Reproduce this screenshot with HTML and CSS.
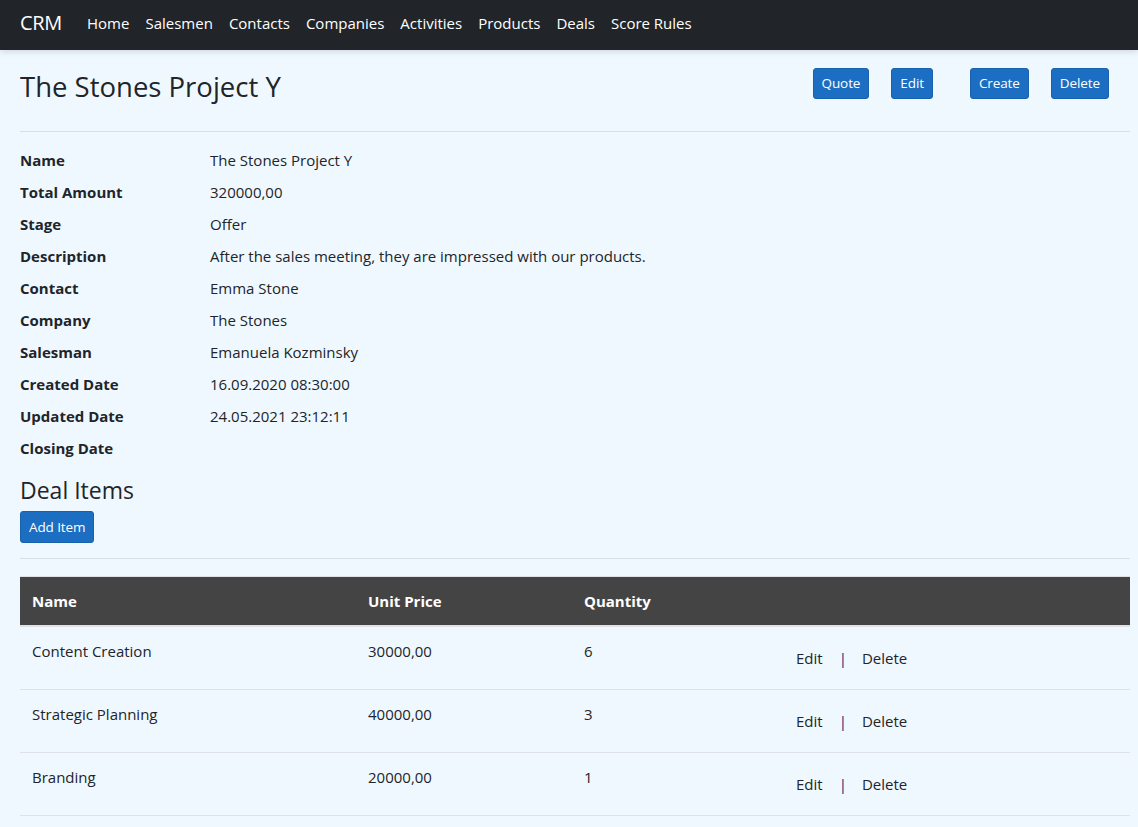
FILE: index.html
```html
<!DOCTYPE html>
<html lang="en">
<head>
<meta charset="utf-8">
<title>CRM - The Stones Project Y</title>
<link rel="stylesheet" href="styles.css">
</head>
<body>
<header class="navbar">
  <a class="brand" href="#">CRM</a>
  <nav class="nav">
    <a href="#">Home</a>
    <a href="#">Salesmen</a>
    <a href="#">Contacts</a>
    <a href="#">Companies</a>
    <a href="#">Activities</a>
    <a href="#">Products</a>
    <a href="#">Deals</a>
    <a href="#">Score Rules</a>
  </nav>
</header>
<main class="container">
  <div class="title-row">
    <h1 class="title">The Stones Project Y</h1>
    <div class="actions">
      <a class="btn" href="#">Quote</a>
      <a class="btn" href="#">Edit</a>
      <a class="btn btn-create" href="#">Create</a>
      <a class="btn" href="#">Delete</a>
    </div>
  </div>
  <hr class="rule">
  <dl class="details">
    <dt>Name</dt><dd>The Stones Project Y</dd>
    <dt>Total Amount</dt><dd>320000,00</dd>
    <dt>Stage</dt><dd>Offer</dd>
    <dt>Description</dt><dd>After the sales meeting, they are impressed with our products.</dd>
    <dt>Contact</dt><dd>Emma Stone</dd>
    <dt>Company</dt><dd>The Stones</dd>
    <dt>Salesman</dt><dd>Emanuela Kozminsky</dd>
    <dt>Created Date</dt><dd>16.09.2020 08:30:00</dd>
    <dt>Updated Date</dt><dd>24.05.2021 23:12:11</dd>
    <dt>Closing Date</dt><dd></dd>
  </dl>
  <h3 class="section-title">Deal Items</h3>
  <a class="btn btn-add" href="#">Add Item</a>
  <hr class="rule rule-items">
  <table class="items">
    <thead>
      <tr>
        <th class="c-name">Name</th>
        <th class="c-price">Unit Price</th>
        <th class="c-qty">Quantity</th>
        <th class="c-act"></th>
      </tr>
    </thead>
    <tbody>
      <tr>
        <td>Content Creation</td>
        <td>30000,00</td>
        <td>6</td>
        <td class="row-actions"><a href="#">Edit</a><span class="sep">|</span><a href="#">Delete</a></td>
      </tr>
      <tr>
        <td>Strategic Planning</td>
        <td>40000,00</td>
        <td>3</td>
        <td class="row-actions"><a href="#">Edit</a><span class="sep">|</span><a href="#">Delete</a></td>
      </tr>
      <tr>
        <td>Branding</td>
        <td>20000,00</td>
        <td>1</td>
        <td class="row-actions"><a href="#">Edit</a><span class="sep">|</span><a href="#">Delete</a></td>
      </tr>
    </tbody>
  </table>
</main>
</body>
</html>
```
FILE: styles.css
```css
* { box-sizing: border-box; }

html, body {
  margin: 0;
  padding: 0;
}

body {
  background: #f0f8ff;
  color: #212529;
  font-family: "Open Sans", "Noto Sans", sans-serif;
  font-size: 15px;
  line-height: 24px;
}

a { text-decoration: none; color: inherit; }

.navbar {
  height: 50px;
  background: #212529;
  display: flex;
  align-items: center;
  padding: 0 20px 4px;
  box-shadow: 0 2px 6px rgba(0, 0, 0, 0.12);
}

.brand {
  color: #fff;
  font-size: 20px;
  margin-right: 17px;
  letter-spacing: -0.3px;
}

.nav {
  display: flex;
}

.nav a {
  color: #fff;
  font-size: 15px;
  padding: 0 8px;
}

.container {
  padding: 0 8px 0 20px;
}

.title-row {
  display: flex;
  align-items: flex-start;
  justify-content: space-between;
  height: 64px;
  margin-top: 17px;
}

.title {
  margin: 0;
  font-size: 27.5px;
  font-weight: 500;
  line-height: 34px;
  padding-top: 3px;
}

.actions {
  display: flex;
  padding-right: 21px;
  margin-top: 1px;
}

.btn {
  display: inline-block;
  background: #1b6ec2;
  color: #fff;
  border: 1px solid #1861ac;
  border-radius: 3px;
  font-size: 13.5px;
  line-height: 21px;
  padding: 4px 8px;
  margin-left: 22px;
  letter-spacing: -0.1px;
}

.actions .btn-create { margin-left: 37px; }

.rule {
  border: 0;
  border-top: 1px solid #d9dfe6;
  margin: 0;
}

.details {
  display: grid;
  grid-template-columns: 190px 1fr;
  margin: 16px 0 0;
}

.details dt {
  font-weight: 700;
  margin-bottom: 8px;
}

.details dd {
  margin: 0 0 8px;
  min-height: 24px;
}

.section-title {
  font-size: 23px;
  font-weight: 500;
  line-height: 30px;
  margin: 7px 0 6px;
}

.btn-add {
  margin-left: 0;
  padding: 4px 8px;
  line-height: 22px;
}

.rule-items { margin-top: 15px; }

.items {
  width: 100%;
  border-collapse: collapse;
  margin-top: 17px;
}

.items th {
  background: #444;
  color: #fff;
  text-align: left;
  font-weight: 700;
  padding: 12px;
  border-top: 1px solid #dee2e6;
  border-bottom: 2px solid #dee2e6;
}

.c-name { width: 336px; }
.c-price { width: 216px; }
.c-qty { width: 212px; }

.items td {
  padding: 12px;
  vertical-align: top;
  border-bottom: 1px solid #dee2e6;
  font-size: 15px;
}

.row-actions {
  padding-top: 19px !important;
  padding-bottom: 19px !important;
}

.row-actions a {
  font-size: 15px;
}

.sep {
  color: #0d1a80;
  margin: 0 15px 0 16px;
}
```
